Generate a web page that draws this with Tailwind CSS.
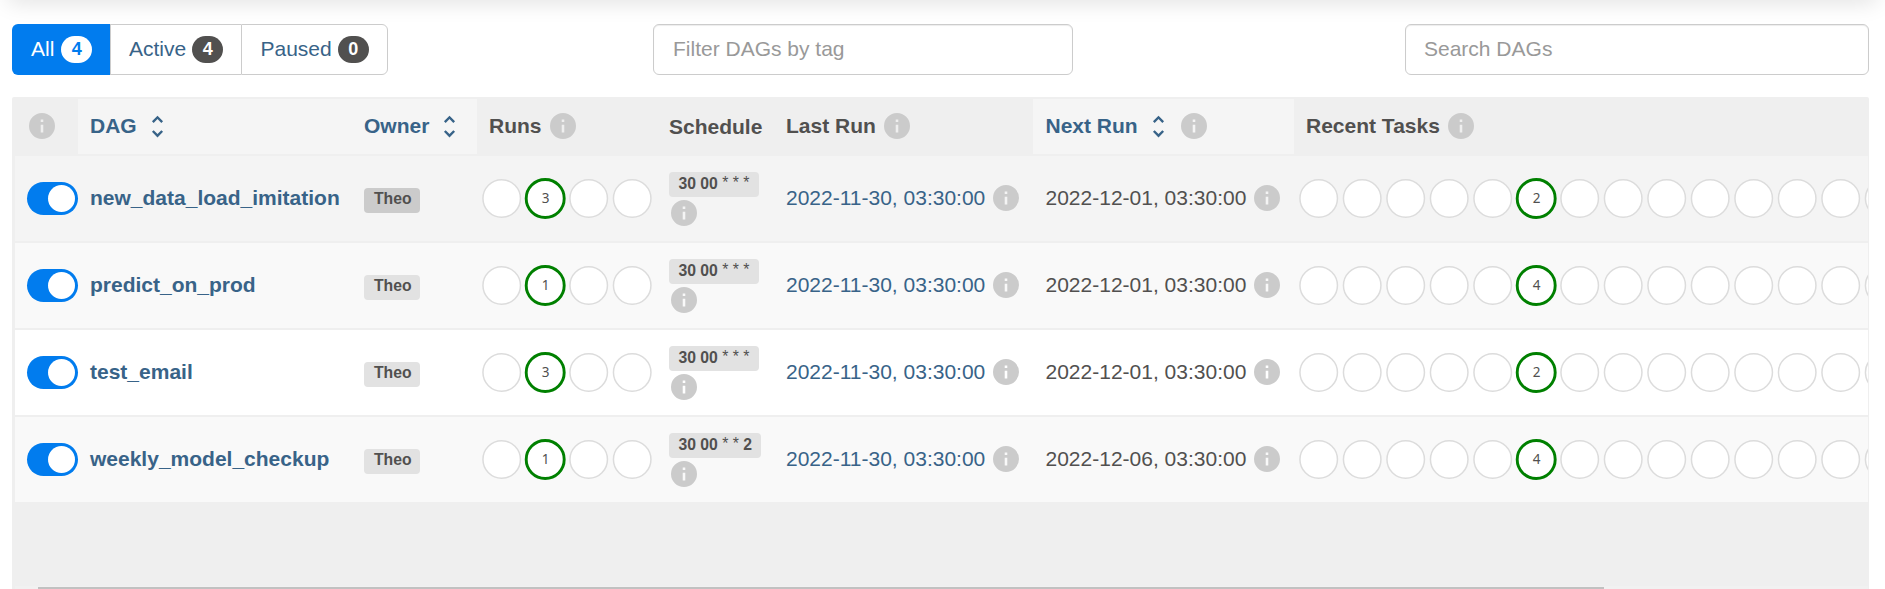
<!DOCTYPE html>
<html lang="en">
<head>
<meta charset="utf-8">
<title>DAGs</title>
<script src="https://cdn.jsdelivr.net/npm/@tailwindcss/browser@4"></script>
</head>
<body class="relative h-[589px] overflow-hidden bg-white font-['Liberation_Sans',Arial,sans-serif] text-[21px] leading-[30px] text-[#51504f]">
<svg class="hidden">
  <symbol id="info" viewBox="2 2 20 20"><path fill="currentColor" fill-rule="evenodd" d="M12 2a10 10 0 1 0 0 20a10 10 0 1 0 0-20zM11 7h2v2h-2zM11 11h2v6h-2z"/></symbol>
  <symbol id="sort" viewBox="0 0 24 24"><path fill="currentColor" d="M12 5.83L15.17 9l1.41-1.41L12 3 7.41 7.59 8.83 9 12 5.83zm0 12.34L8.83 15l-1.41 1.41L12 21l4.59-4.59L15.17 15 12 18.17z"/></symbol>
</svg>
<div class="absolute -top-5 left-2 right-2 h-5 shadow-[0_2px_22px_rgba(0,0,0,0.13)]"></div>

<div class="flex h-[97px] items-start justify-between pl-3 pr-4 pt-6">
  <div class="flex h-[51px] w-[376px] text-[#386388]">
    <div class="flex w-[98px] items-center rounded-l-[6px] bg-[#017cee] pb-px pl-[19px] text-white">All<span class="ml-[7px] flex h-[27px] w-[31px] items-center justify-center rounded-full bg-white text-[18px] font-bold text-[#017cee]">4</span></div>
    <div class="flex w-[131px] items-center border-y border-l border-[#ccc] pb-px pl-[18px]">Active<span class="ml-[6px] flex h-[27px] w-[31px] items-center justify-center rounded-full bg-[#51504f] text-[18px] font-bold text-white">4</span></div>
    <div class="flex w-[147px] items-center rounded-r-[6px] border border-[#ccc] pb-px pl-[18.5px]">Paused<span class="ml-[6px] flex h-[27px] w-[31px] items-center justify-center rounded-full bg-[#51504f] text-[18px] font-bold text-white">0</span></div>
  </div>
  <div class="ml-[265px] h-[51px] w-[420px] rounded-[6px] border border-[#ccc] bg-white pl-[19px] pt-[9px] text-[#999] shadow-[inset_0_1px_1px_rgba(0,0,0,0.075)]">Filter DAGs by tag</div>
  <div class="ml-[332px] h-[51px] w-[464px] rounded-[6px] border border-[#ccc] bg-white pl-[18px] pt-[9px] text-[#999] shadow-[inset_0_1px_1px_rgba(0,0,0,0.075)]">Search DAGs</div>
</div>

<div class="ml-3 flex h-[492px] w-[1857px] flex-col overflow-hidden rounded-t-[2px] bg-[#efefef] pl-[3px] pr-px pt-[2px]">
  <div class="mb-[2px] flex h-[55px] shrink-0 font-bold">
    <div class="flex w-[63px] items-center pb-px pl-[14px]"><svg class="size-[26px] text-[#cbcbcb]"><use href="#info"/></svg></div>
    <div class="flex w-[273px] items-center bg-[#f5f5f5] pb-px pl-3 text-[#386388]">DAG<svg class="ml-[6px] size-[29px]"><use href="#sort"/></svg></div>
    <div class="flex w-[126px] items-center bg-[#f5f5f5] pb-px pl-[13px] text-[#386388]">Owner<svg class="ml-[6px] size-[29px]"><use href="#sort"/></svg></div>
    <div class="flex w-[179px] items-center pb-px pl-3">Runs<svg class="ml-[8px] size-[26px] text-[#cbcbcb]"><use href="#info"/></svg></div>
    <div class="flex w-[117px] items-center pl-[13px] pt-px">Schedule</div>
    <div class="flex w-[260px] items-center pb-px pl-[13px]">Last Run<svg class="ml-[8px] size-[26px] text-[#cbcbcb]"><use href="#info"/></svg></div>
    <div class="flex w-[261px] items-center bg-[#f5f5f5] pb-px pl-[12.5px]"><span class="text-[#386388]">Next Run</span><svg class="ml-[6px] size-[29px] text-[#386388]"><use href="#sort"/></svg><svg class="ml-[8px] size-[26px] text-[#cbcbcb]"><use href="#info"/></svg></div>
    <div class="flex flex-1 items-center pb-px pl-3">Recent Tasks<svg class="ml-[8px] size-[26px] text-[#cbcbcb]"><use href="#info"/></svg></div>
  </div>
  <div id="rows" class="flex flex-col gap-[2px]"></div>
  <div class="mt-auto h-[3px] shrink-0 bg-[#f1f1f1] pt-px"><div class="ml-[23px] h-[2px] w-[1566px] bg-[#c1c1c1]"></div></div>
</div>

<script>
const rows = [
  ['new_data_load_imitation', 3, '30 00 * * *', '2022-12-01', 2, 'bg-[#f4f4f4]', 'bg-[#cbcbcb]'],
  ['predict_on_prod', 1, '30 00 * * *', '2022-12-01', 4, 'bg-[#f9f9f9]', 'bg-[#e2e2e2]'],
  ['test_email', 3, '30 00 * * *', '2022-12-01', 2, 'bg-white', 'bg-[#e2e2e2]'],
  ['weekly_model_checkup', 1, '30 00 * * 2', '2022-12-06', 4, 'bg-[#f9f9f9]', 'bg-[#e2e2e2]'],
];
const info = '<svg class="ml-[8px] size-[26px] shrink-0 text-[#cbcbcb]"><use href="#info"/></svg>';
// Wildcards are set in regular weight, slightly raised, so they stay lighter than the digits.
const cronText = cron => cron.replace(/\*/g, '<span class="align-[1px] leading-none font-normal">*</span>');
// A strip of state circles; only the one at index `active` carries a count.
const circles = (n, active, count) => {
  let s = '';
  for (let i = 0; i < n; i++) {
    const x = 24.7 + i * 43.5;
    s += i === active
      ? `<circle cx="${x}" cy="42.5" r="19" fill="#fff" stroke="#008000" stroke-width="2.9"/><text x="${x + 0.3}" y="47" text-anchor="middle" fill="#51504f" class="font-['Noto_Sans',sans-serif] text-[13.5px]">${count}</text>`
      : `<circle cx="${x}" cy="42.5" r="18.75" fill="#fff" stroke="#dcdcdc" stroke-width="1.5"/>`;
  }
  return s;
};
document.getElementById('rows').innerHTML = rows.map(([name, runs, cron, next, tasks, bg, tag]) => `
  <div class="flex h-[85px] ${bg}">
    <div class="flex w-[63px] items-center pl-3"><div class="flex h-[33px] w-[51px] justify-end rounded-full bg-[#017cee] p-[3px]"><div class="size-[27px] rounded-full bg-white"></div></div></div>
    <div class="flex w-[273px] items-center pb-px pl-3 font-bold text-[#386388]">${name}</div>
    <div class="flex w-[126px] items-center pl-[13px] pt-[4px]"><span class="h-[25px] rounded-[4px] pl-[10px] pr-[8.5px] text-[15.75px] leading-[22px] font-bold ${tag}">Theo</span></div>
    <svg class="h-[85px] w-[179px]">${circles(4, 1, runs)}</svg>
    <div class="flex w-[117px] flex-col items-start pl-[13px] pt-4"><span class="h-[25px] rounded-[4px] bg-[#e2e2e2] px-[9.4px] text-[15.75px] leading-[23px] font-bold whitespace-nowrap">${cronText(cron)}</span><svg class="ml-[2px] mt-[3px] size-[26px] text-[#cbcbcb]"><use href="#info"/></svg></div>
    <div class="flex w-[260px] items-center pb-px pl-[13px] text-[#386388]">2022-11-30, 03:30:00${info}</div>
    <div class="flex w-[261px] items-center pb-px pl-[12.5px]">${next}, 03:30:00${info}</div>
    <svg class="h-[85px] flex-1">${circles(14, 5, tasks)}</svg>
  </div>`).join('');
</script>
</body>
</html>
